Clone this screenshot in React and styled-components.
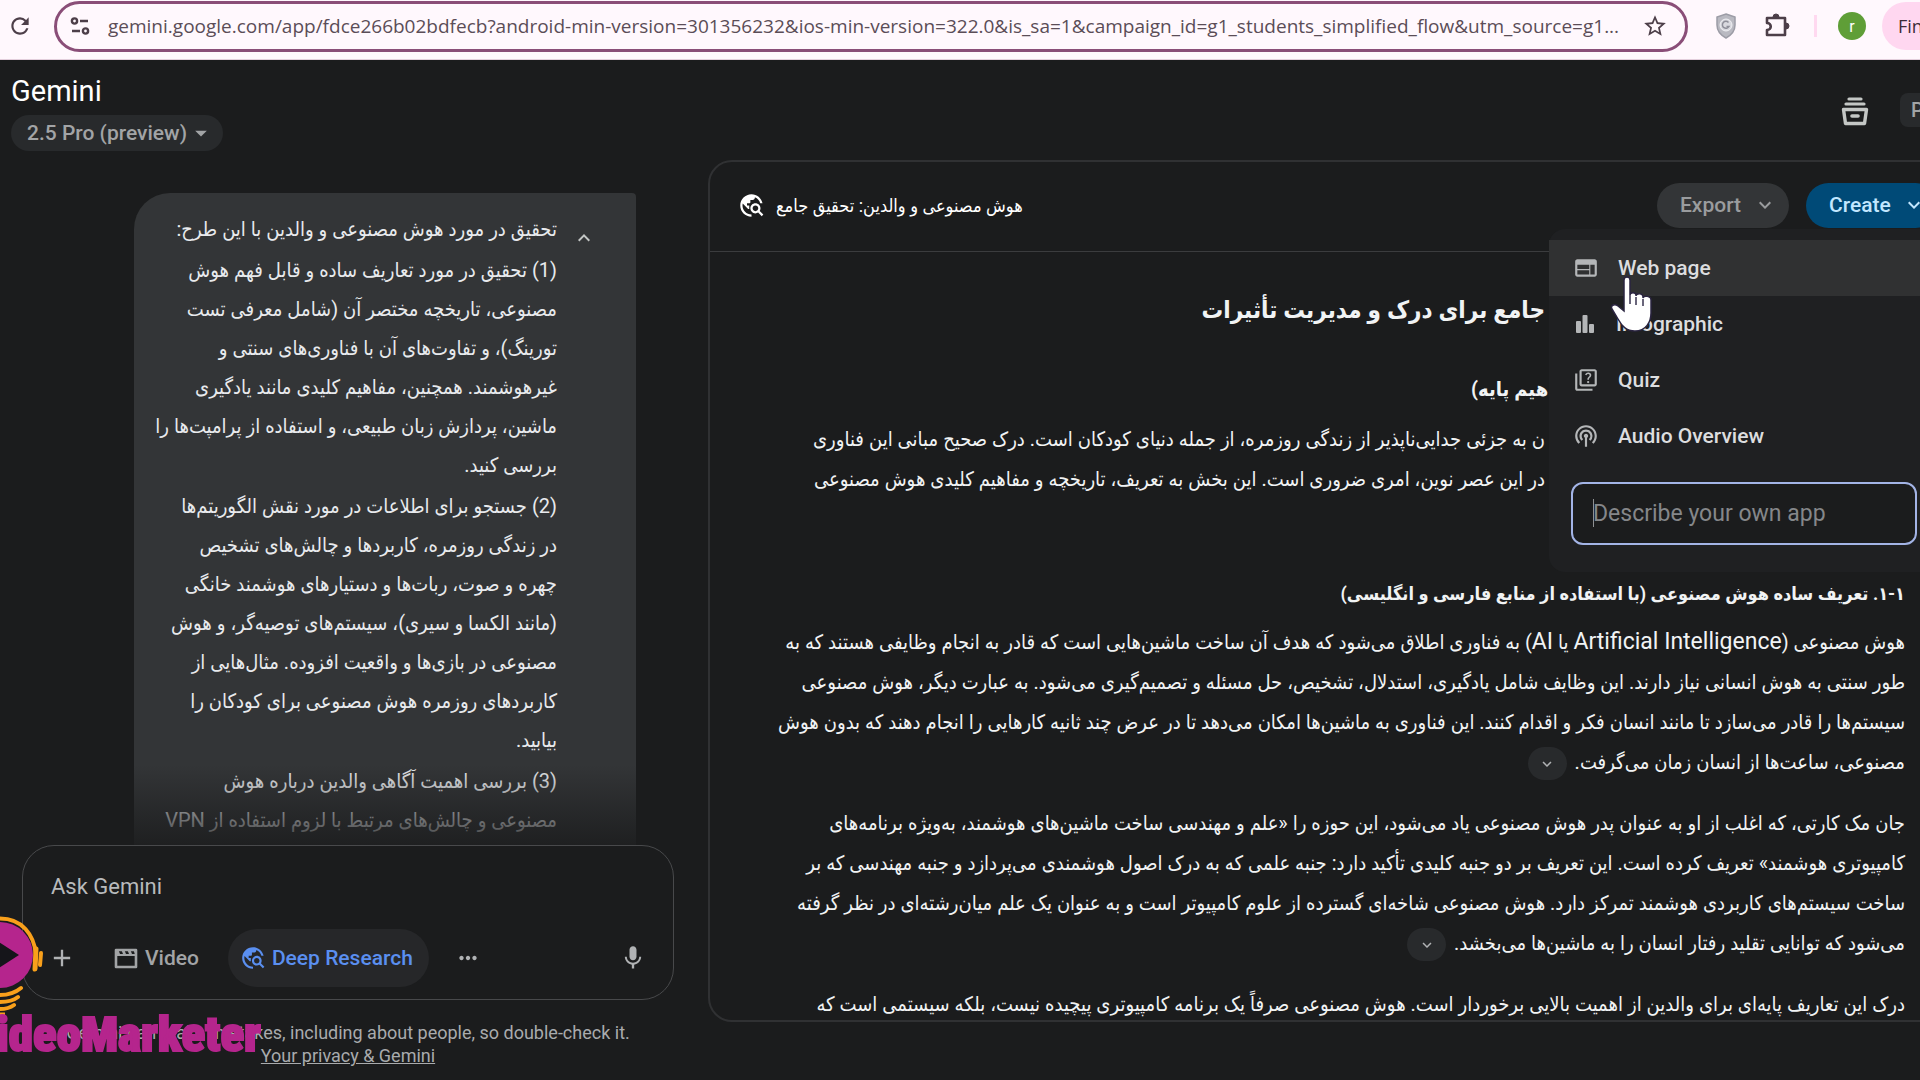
import React from "react";
import styled, { createGlobalStyle, css } from "styled-components";
import {
  MdAdd,
  MdMoreHoriz,
  MdMic,
  MdOutlineQuiz,
  MdPodcasts,
  MdRefresh,
  MdStarBorder,
  MdTravelExplore,
  MdWeb,
  MdExpandMore,
  MdExpandLess,
  MdArrowDropDown,
} from "react-icons/md";

const latin = `Roboto, "DejaVu Sans", sans-serif`;
const persian = `Roboto, "DejaVu Sans Condensed", "DejaVu Sans", sans-serif`;

const GlobalStyle = createGlobalStyle`
  *, *::before, *::after { box-sizing: border-box; }
  body {
    margin: 0;
    overflow: hidden;
    background: #1b1c1d;
    color: #e3e3e3;
    font-family: ${latin};
  }
  button, input { font: inherit; color: inherit; }
  button { border: 0; padding: 0; background: none; cursor: pointer; }
  h1, h2, h3, p { margin: 0; }
`;

const Page = styled.div`
  display: flex;
  flex-direction: column;
  height: 100vh;
  overflow: hidden;
`;

/* Browser toolbar */

const Toolbar = styled.header`
  display: flex;
  align-items: center;
  flex: none;
  height: 60px;
  padding: 1px 0 8px 6px;
  background: #fff8fd;
  border-bottom: 1px solid #e3cfdc;
  color: #4d3f49;
  overflow: hidden;
`;

const ToolbarButton = styled.button`
  display: grid;
  place-items: center;
  flex: none;
  width: 28px;
  height: 28px;
  color: #4d3f49;
`;

const AddressBar = styled.div`
  display: flex;
  align-items: center;
  flex: 1;
  min-width: 0;
  height: 51px;
  margin-left: 20px;
  padding: 0 16px 0 13px;
  gap: 18px;
  border: 3px solid #8a4e78;
  border-radius: 26px;
`;

const AddressInput = styled.input`
  flex: 1;
  min-width: 0;
  padding: 0;
  border: 0;
  outline: 0;
  background: none;
  font-family: "Open Sans", sans-serif;
  font-size: 19px;
  color: #5b4d57;
`;

const Extensions = styled.div`
  display: flex;
  align-items: center;
  flex: none;
  gap: 23px;
  margin-left: 24px;
`;

const Separator = styled.span`
  width: 3px;
  height: 22px;
  background: #ffd9f0;
`;

const Avatar = styled.button`
  width: 28px;
  height: 28px;
  margin-left: -2px;
  border-radius: 50%;
  background: #5f9e37;
  color: #fff;
  font-size: 16px;
`;

const UpdateButton = styled.button`
  width: 38px;
  height: 48px;
  margin-left: -7px;
  padding-left: 16px;
  border-radius: 24px 0 0 24px;
  background: #ffd7f0;
  color: #3c2b37;
  font-family: "Open Sans", sans-serif;
  font-size: 18px;
  text-align: left;
  overflow: hidden;
`;

/* Gemini header */

const AppHeader = styled.div`
  display: flex;
  justify-content: space-between;
  align-items: flex-start;
  flex: none;
  height: 100px;
  padding: 15px 0 0 11px;
`;

const Brand = styled.h1`
  font-size: 29px;
  font-weight: 400;
  line-height: 32px;
  color: #fff;
`;

const ModelPicker = styled.button`
  display: flex;
  align-items: center;
  height: 36px;
  margin-top: 8px;
  padding: 0 8px 0 16px;
  border-radius: 18px;
  background: #282a2c;
  color: #a2a4a6;
  font-size: 21px;
  font-weight: 500;
`;

const HeaderActions = styled.div`
  display: flex;
  align-items: center;
  gap: 31px;
  margin-top: 18px;
`;

const PlanBadge = styled.span`
  width: 20px;
  height: 34px;
  padding-left: 11px;
  border-radius: 8px 0 0 8px;
  background: #282a2c;
  color: #a2a4a6;
  font-size: 20px;
  font-weight: 500;
  line-height: 34px;
  overflow: hidden;
`;

const Columns = styled.main`
  display: grid;
  grid-template-columns: minmax(0, 59fr) minmax(0, 101fr);
  flex: 1;
  min-height: 0;
`;

/* Chat column */

const ChatColumn = styled.section`
  display: flex;
  flex-direction: column;
  min-height: 0;
  padding: 0 34px 0 22px;
`;

const Conversation = styled.div`
  position: relative;
  flex: 1;
  min-height: 0;
  padding: 33px 38px 0 112px;
  overflow: hidden;

  &::after {
    content: "";
    position: absolute;
    inset: auto 0 0 0;
    height: 80px;
    background: linear-gradient(rgba(27, 28, 29, 0), rgba(27, 28, 29, 0.85));
  }
`;

const Bubble = styled.div`
  display: flex;
  flex-direction: row-reverse;
  align-items: flex-start;
  height: 100%;
  padding: 17px 40px 0 16px;
  border-radius: 36px 4px 0 0;
  background: #333537;
`;

const CollapseButton = styled.button`
  display: grid;
  place-items: center;
  flex: none;
  width: 24px;
  height: 24px;
  margin: 16px 0 0 15px;
  color: #c4c7c5;
`;

const Prompt = styled.div`
  display: flex;
  flex-direction: column;
  flex: 1;
  min-width: 0;
  gap: 2px;
  direction: rtl;
  font-family: ${persian};
  font-size: 20px;
  line-height: 39px;
  color: #e8eaed;
`;

const Line = styled.span`
  display: block;
  white-space: nowrap;
`;

const LatinText = styled.span`
  font-family: ${latin};
  font-size: 23px;
  line-height: 1;
`;

const Composer = styled.form`
  display: flex;
  flex-direction: column;
  justify-content: space-between;
  flex: none;
  height: 155px;
  padding: 24px 26px 12px 28px;
  border: 1px solid #48494b;
  border-radius: 32px;
`;

const ComposerInput = styled.input`
  width: 100%;
  height: 32px;
  padding: 0;
  border: 0;
  outline: 0;
  background: none;
  font-size: 22px;

  &::placeholder { color: #b8babc; opacity: 1; }
`;

const Tools = styled.div`
  display: flex;
  align-items: center;
  gap: 25px;
  height: 58px;
  margin-left: -3px;
`;

const ToolButton = styled.button`
  display: flex;
  align-items: center;
  gap: 6px;
  height: 58px;
  padding: 0 4px 0 12px;
  border-radius: 29px;
  color: #a2a4a6;
  font-size: 21px;
  font-weight: 500;
  white-space: nowrap;

  ${(p) =>
    p.$active &&
    css`
      padding: 0 16px 0 12px;
      background: #262729;
      color: #5a8ff0;
    `}
`;

const IconButton = styled.button`
  display: grid;
  place-items: center;
  flex: none;
  width: 28px;
  height: 28px;
  margin-left: ${(p) => (p.$push ? "auto" : "0")};
  color: #b0b2b4;
`;

const Footer = styled.footer`
  display: flex;
  flex-direction: column;
  align-items: center;
  flex: none;
  height: 80px;
  padding-top: 21px;
  font-size: 18px;
  line-height: 23px;
  color: #a9abad;
  white-space: nowrap;

  a { color: inherit; }
`;

/* Report panel */

const Panel = styled.section`
  display: flex;
  flex-direction: column;
  min-height: 0;
  margin: 0 -48px 58px 0;
  border: 2px solid #303133;
  border-radius: 24px;
`;

const PanelHeader = styled.div`
  display: flex;
  align-items: center;
  gap: 11px;
  flex: none;
  height: 90px;
  padding: 0 28px 3px;
  border-bottom: 1px solid #3b3c3e;
`;

const PanelTitle = styled.h2`
  flex: 1;
  font-family: ${persian};
  font-size: 18px;
  font-weight: 400;
  color: #fff;
`;

const PanelActions = styled.div`
  display: flex;
  gap: 17px;
`;

const PillButton = styled.button`
  display: flex;
  align-items: center;
  justify-content: space-between;
  width: 132px;
  height: 45px;
  padding: 0 12px 0 23px;
  border-radius: 23px;
  background: ${(p) => (p.$primary ? "#004a77" : "#333537")};
  color: ${(p) => (p.$primary ? "#c2e7ff" : "#9a9c9e")};
  font-size: 21px;
  font-weight: 500;
`;

const MenuAnchor = styled.div`
  position: relative;
`;

const Menu = styled.div`
  position: absolute;
  z-index: 2;
  top: 46px;
  right: -1px;
  width: 390px;
  height: 343px;
  padding-top: 11px;
  border-radius: 16px;
  background: #1f2022;
`;

const MenuItem = styled.button`
  display: flex;
  align-items: center;
  gap: 19px;
  width: 100%;
  height: 56px;
  padding-left: 24px;
  background: ${(p) => (p.$hovered ? "#303132" : "none")};
  color: #dcdddf;
  font-size: 21px;
  font-weight: 500;

  svg { color: #b4b6b8; }
`;

const AppInput = styled.input`
  display: block;
  width: 346px;
  height: 63px;
  margin: 18px 0 0 22px;
  padding: 0 20px;
  border: 2px solid #a3b4e6;
  border-radius: 12px;
  outline: 0;
  background: linear-gradient(#8f9193, #8f9193) 20px center / 1px 28px no-repeat #1b1c1d;
  caret-color: transparent;
  font-size: 23px;

  &::placeholder { color: #85878a; opacity: 1; }
`;

const Pointer = styled.svg`
  position: absolute;
  z-index: 3;
  left: 61px;
  top: 46px;
  pointer-events: none;
`;

const Report = styled.article`
  flex: 1;
  min-height: 0;
  padding: 36px 61px 0 28px;
  overflow: hidden;
  direction: rtl;
  font-family: ${persian};
  font-size: 20px;
  line-height: 40px;
  color: #f1f3f4;
`;

const ReportTitle = styled.h2`
  padding-right: 360px;
  font-size: 24px;
  line-height: 44px;
  white-space: nowrap;
`;

const SectionTitle = styled.h2`
  margin-top: 38px;
  padding-right: 326px;
  font-size: 20px;
  line-height: 39px;
  white-space: nowrap;
`;

const SubTitle = styled.h3`
  margin: 75px 0 9px;
  font-size: 18px;
  line-height: 39px;
`;

const Paragraph = styled.p`
  margin-bottom: 21px;

  &:last-child { margin-bottom: 0; }
`;

const Intro = styled.p`
  margin-top: 10px;
  padding-right: 360px;
`;

const SourceButton = styled.button`
  display: inline-grid;
  place-items: center;
  width: 39px;
  height: 33px;
  margin-right: 8px;
  border-radius: 17px;
  background: #282a2c;
  color: #b0b2b4;
  vertical-align: middle;
`;

/* Watermark */

const Watermark = styled.div`
  position: fixed;
  z-index: 5;
  left: 0;
  bottom: 28px;
  display: flex;
  flex-direction: column;
  pointer-events: none;
`;

const WatermarkName = styled.span`
  margin-left: -4px;
  font-family: "Roboto Condensed", Roboto, sans-serif;
  font-size: 49px;
  font-weight: 900;
  line-height: 34px;
  color: #b5258d;
  -webkit-text-stroke: 2px #b5258d;
`;

const SiteInfoIcon = () => (
  <svg width="20" height="20" viewBox="0 0 20 20" fill="none" stroke="#4d3f49" strokeWidth="2.4" aria-hidden="true">
    <circle cx="4.5" cy="5" r="2.6" />
    <path d="M10 5h8M2 15h8" />
    <circle cx="15.5" cy="15" r="2.6" />
  </svg>
);

const ShieldIcon = () => (
  <svg width="22" height="26" viewBox="0 0 22 26" aria-hidden="true">
    <path d="M11 1l9 3v8c0 6-3.500 10-9 13C5.500 22 2 18 2 12V4z" fill="#b9b9c1" stroke="#9c9ca6" strokeWidth="1.500" />
    <circle cx="11" cy="12" r="6" fill="#d9d9df" stroke="#efeff3" />
    <path d="M13.500 9.500a3.500 3.500 0 1 0 .5 4h-2.500" fill="none" stroke="#8f8f9a" strokeWidth="1.500" />
  </svg>
);

const PuzzleIcon = () => (
  <svg width="28" height="28" viewBox="0 0 28 28" aria-hidden="true">
    <path
      d="M4 6h18v17H4v-5c5 0 5-7 0-7z"
      fill="none"
      stroke="#4d3f49"
      strokeWidth="2.600"
      strokeLinejoin="round"
    />
    <path d="M10 5a3 3 0 0 1 6 0zM23 11a3 3 0 0 1 0 6z" fill="#4d3f49" stroke="#4d3f49" />
  </svg>
);

const ArchiveIcon = () => (
  <svg width="28" height="30" viewBox="0 0 28 30" fill="none" stroke="#c4c7c5" strokeLinecap="round" strokeLinejoin="round" aria-hidden="true">
    <path d="M8 3h12M5 8h18" strokeWidth="3.200" />
    <path d="M2.500 13.500h23l-2 14h-19z" strokeWidth="3.400" />
    <path d="M11 20h6" strokeWidth="3.600" />
  </svg>
);

const BarsIcon = () => (
  <svg width="24" height="24" viewBox="0 0 24 24" fill="currentColor" aria-hidden="true">
    <rect x="3" y="9" width="5" height="12" rx="1" />
    <rect x="9.500" y="3" width="5" height="18" rx="1" />
    <rect x="16" y="12" width="5" height="9" rx="1" />
  </svg>
);

const ClapperIcon = () => (
  <svg width="26" height="26" viewBox="0 0 26 26" aria-hidden="true">
    <path d="M3 5h20v17H3z" fill="none" stroke="currentColor" strokeWidth="2.600" strokeLinejoin="round" />
    <path d="M2 4h3l2 5h3L8 4h3l2 5h3l-2-5h3l2 5h3l-2-5h4v7H2z" fill="currentColor" />
  </svg>
);

const HandPointer = () => (
  <Pointer width="44" height="60" viewBox="0 0 44 60" aria-hidden="true">
    <path
      d="M14 5c0-4 6-4 6 0v15c0-3 6-3 6 0v1c0-3 7-3 7 1v1c1-3 8-2 8 2v13c0 9-5 18-16 18-9 0-13-5-17-12L2 34c-2-3 2-6 6-3l6 5z"
      fill="#fff"
      stroke="#2a2440"
      strokeWidth="1.500"
    />
    <path d="M20 20v9M26 22v8M33 24v7" stroke="#3a3550" strokeWidth="1.500" fill="none" />
  </Pointer>
);

const WatermarkLogo = () => (
  <svg width="46" height="104" viewBox="0 0 46 104" aria-hidden="true">
    <circle cx="0" cy="41" r="33" fill="#b5258d" />
    <path d="M-6 25v32l25-16z" fill="#15151a" />
    <path d="M0 4.500c22 0 34 16 36 36" fill="none" stroke="#f9a01b" strokeWidth="4" />
    <path d="M36 35l-1 20" stroke="#f9a01b" strokeWidth="5" strokeLinecap="round" />
    <path d="M41 39l-1 12" stroke="#f9a01b" strokeWidth="4" strokeLinecap="round" />
    <path d="M0 81c8 0 15-2 21-7M0 88c7 0 13-1 18-5M0 95c6 0 10-1 14-4" fill="none" stroke="#f9a01b" strokeWidth="4" strokeLinecap="round" />
    <path d="M0 102h5" stroke="#f9a01b" strokeWidth="7" />
  </svg>
);

const promptParts = [
  ["تحقیق در مورد هوش مصنوعی و والدین با این طرح:"],
  [
    "(1) تحقیق در مورد تعاریف ساده و قابل فهم هوش",
    "مصنوعی، تاریخچه مختصر آن (شامل معرفی تست",
    "تورینگ)، و تفاوت‌های آن با فناوری‌های سنتی و",
    "غیرهوشمند. همچنین، مفاهیم کلیدی مانند یادگیری",
    "ماشین، پردازش زبان طبیعی، و استفاده از پرامپت‌ها را",
    "بررسی کنید.",
  ],
  [
    "(2) جستجو برای اطلاعات در مورد نقش الگوریتم‌ها",
    "در زندگی روزمره، کاربردها و چالش‌های تشخیص",
    "چهره و صوت، ربات‌ها و دستیارهای هوشمند خانگی",
    "(مانند الکسا و سیری)، سیستم‌های توصیه‌گر، و هوش",
    "مصنوعی در بازی‌ها و واقعیت افزوده. مثال‌هایی از",
    "کاربردهای روزمره هوش مصنوعی برای کودکان را",
    "بیابید.",
  ],
  ["(3) بررسی اهمیت آگاهی والدین درباره هوش", "مصنوعی و چالش‌های مرتبط با لزوم استفاده از VPN"],
];

const intro = [
  "ن به جزئی جدایی‌ناپذیر از زندگی روزمره، از جمله دنیای کودکان است. درک صحیح مبانی این فناوری",
  "در این عصر نوین، امری ضروری است. این بخش به تعریف، تاریخچه و مفاهیم کلیدی هوش مصنوعی",
];

const paragraphs = [
  {
    source: true,
    lines: [
      "هوش مصنوعی (Artificial Intelligence یا AI) به فناوری اطلاق می‌شود که هدف آن ساخت ماشین‌هایی است که قادر به انجام وظایفی هستند که به",
      "طور سنتی به هوش انسانی نیاز دارند. این وظایف شامل یادگیری، استدلال، تشخیص، حل مسئله و تصمیم‌گیری می‌شود. به عبارت دیگر، هوش مصنوعی",
      "سیستم‌ها را قادر می‌سازد تا مانند انسان فکر و اقدام کنند. این فناوری به ماشین‌ها امکان می‌دهد تا در عرض چند ثانیه کارهایی را انجام دهند که بدون هوش",
      "مصنوعی، ساعت‌ها از انسان زمان می‌گرفت.",
    ],
  },
  {
    source: true,
    lines: [
      "جان مک کارتی، که اغلب از او به عنوان پدر هوش مصنوعی یاد می‌شود، این حوزه را «علم و مهندسی ساخت ماشین‌های هوشمند، به‌ویژه برنامه‌های",
      "کامپیوتری هوشمند» تعریف کرده است. این تعریف بر دو جنبه کلیدی تأکید دارد: جنبه علمی که به درک اصول هوشمندی می‌پردازد و جنبه مهندسی که بر",
      "ساخت سیستم‌های کاربردی هوشمند تمرکز دارد. هوش مصنوعی شاخه‌ای گسترده از علوم کامپیوتر است و به عنوان یک علم میان‌رشته‌ای در نظر گرفته",
      "می‌شود که توانایی تقلید رفتار انسان را به ماشین‌ها می‌بخشد.",
    ],
  },
  {
    lines: [
      "درک این تعاریف پایه‌ای برای والدین از اهمیت بالایی برخوردار است. هوش مصنوعی صرفاً یک برنامه کامپیوتری پیچیده نیست، بلکه سیستمی است که",
    ],
  },
];

const menuItems = [
  { label: "Web page", Icon: MdWeb, hovered: true },
  { label: "Infographic", Icon: BarsIcon },
  { label: "Quiz", Icon: MdOutlineQuiz },
  { label: "Audio Overview", Icon: MdPodcasts },
];

const url =
  "gemini.google.com/app/fdce266b02bdfecb?android-min-version=301356232&ios-min-version=322.0&is_sa=1&campaign_id=g1_students_simplified_flow&utm_source=g1...";

/* Latin words inside Persian text are set a little larger so both scripts look even. */
const withLatin = (line) =>
  line
    .split(/([A-Za-z]+(?: [A-Za-z]+)*)/)
    .map((part, i) => (i % 2 ? <LatinText key={i}>{part}</LatinText> : part));

function BrowserToolbar() {
  return (
    <Toolbar>
      <ToolbarButton aria-label="Reload"><MdRefresh size={26} /></ToolbarButton>
      <AddressBar>
        <SiteInfoIcon />
        <AddressInput aria-label="Address" defaultValue={url} />
        <ToolbarButton aria-label="Bookmark"><MdStarBorder size={26} /></ToolbarButton>
      </AddressBar>
      <Extensions>
        <ToolbarButton aria-label="Shield"><ShieldIcon /></ToolbarButton>
        <ToolbarButton aria-label="Extensions"><PuzzleIcon /></ToolbarButton>
        <Separator />
        <Avatar>r</Avatar>
        <UpdateButton>Fin</UpdateButton>
      </Extensions>
    </Toolbar>
  );
}

function Chat() {
  return (
    <ChatColumn>
      <Conversation>
        <Bubble>
          <CollapseButton aria-label="Collapse"><MdExpandLess size={24} /></CollapseButton>
          <Prompt lang="fa">
            {promptParts.map((lines) => (
              <p key={lines[0]}>
                {lines.map((line) => <Line key={line}>{line}</Line>)}
              </p>
            ))}
          </Prompt>
        </Bubble>
      </Conversation>
      <Composer onSubmit={(e) => e.preventDefault()}>
        <ComposerInput aria-label="Ask Gemini" placeholder="Ask Gemini" />
        <Tools>
          <IconButton type="button" aria-label="Add"><MdAdd size={28} /></IconButton>
          <ToolButton type="button"><ClapperIcon />Video</ToolButton>
          <ToolButton type="button" $active><MdTravelExplore size={26} />Deep Research</ToolButton>
          <IconButton type="button" aria-label="More"><MdMoreHoriz size={26} /></IconButton>
          <IconButton type="button" aria-label="Microphone" $push><MdMic size={28} /></IconButton>
        </Tools>
      </Composer>
      <Footer>
        <p>Gemini can make mistakes, including about people, so double-check it.</p>
        <a href="#privacy">Your privacy &amp; Gemini</a>
      </Footer>
    </ChatColumn>
  );
}

function ReportPanel() {
  return (
    <Panel>
      <PanelHeader>
        <MdTravelExplore size={27} color="#fff" />
        <PanelTitle lang="fa">هوش مصنوعی و والدین: تحقیق جامع</PanelTitle>
        <PanelActions>
          <PillButton>Export<MdExpandMore size={24} /></PillButton>
          <MenuAnchor>
            <PillButton $primary>Create<MdExpandMore size={24} /></PillButton>
            <Menu>
              {menuItems.map(({ label, Icon, hovered }) => (
                <MenuItem key={label} $hovered={hovered}><Icon size={26} />{label}</MenuItem>
              ))}
              <AppInput aria-label="Describe your own app" placeholder="Describe your own app" />
              <HandPointer />
            </Menu>
          </MenuAnchor>
        </PanelActions>
      </PanelHeader>
      <Report lang="fa">
        <ReportTitle>جامع برای درک و مدیریت تأثیرات</ReportTitle>
        <SectionTitle>مفاهیم پایه)</SectionTitle>
        <Intro>
          {intro.map((line) => <Line key={line}>{line}</Line>)}
        </Intro>
        <SubTitle>۱-۱. تعریف ساده هوش مصنوعی (با استفاده از منابع فارسی و انگلیسی)</SubTitle>
        {paragraphs.map(({ lines, source }) => (
          <Paragraph key={lines[0]}>
            {lines.map((line, i) => (
              <Line key={line}>
                {withLatin(line)}
                {source && i === lines.length - 1 && (
                  <SourceButton aria-label="Sources"><MdExpandMore size={18} /></SourceButton>
                )}
              </Line>
            ))}
          </Paragraph>
        ))}
      </Report>
    </Panel>
  );
}

export default function App() {
  return (
    <Page>
      <GlobalStyle />
      <BrowserToolbar />
      <AppHeader>
        <div>
          <Brand>Gemini</Brand>
          <ModelPicker>2.5 Pro (preview)<MdArrowDropDown size={28} /></ModelPicker>
        </div>
        <HeaderActions>
          <IconButton aria-label="Archive"><ArchiveIcon /></IconButton>
          <PlanBadge>P</PlanBadge>
        </HeaderActions>
      </AppHeader>
      <Columns>
        <Chat />
        <ReportPanel />
      </Columns>
      <Watermark>
        <WatermarkLogo />
        <WatermarkName>ideoMarketer</WatermarkName>
      </Watermark>
    </Page>
  );
}
